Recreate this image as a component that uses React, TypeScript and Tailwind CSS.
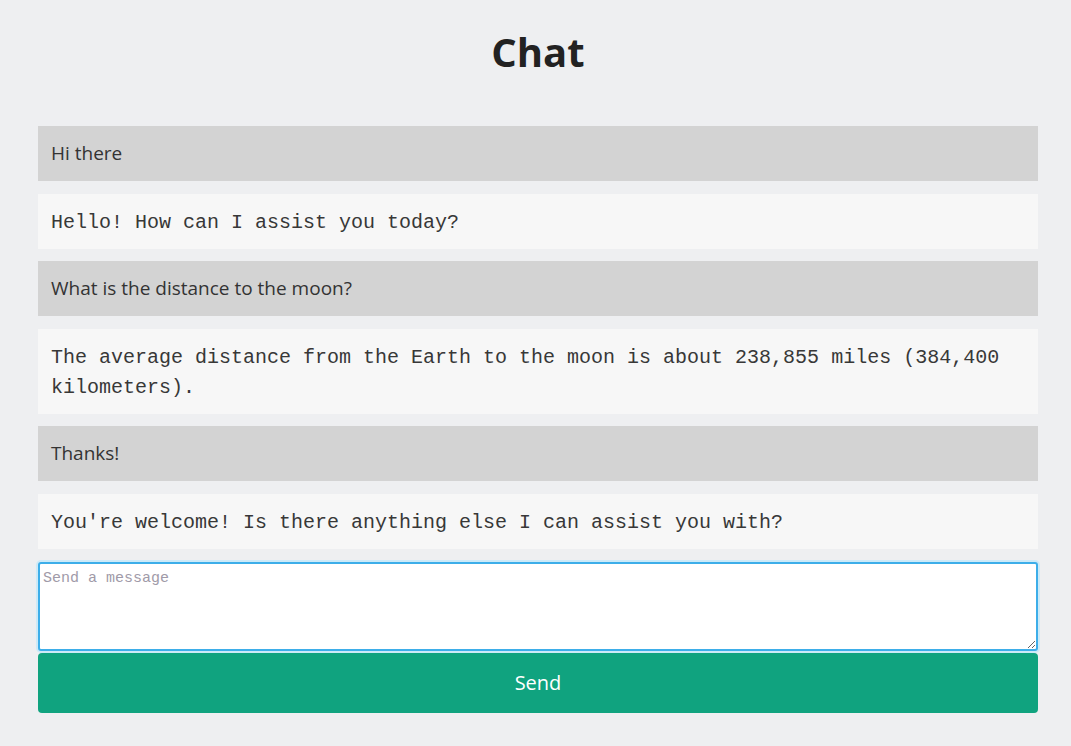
import React from "react";

const messages = [
  { role: "user", text: "Hi there" },
  { role: "assistant", text: "Hello! How can I assist you today?" },
  { role: "user", text: "What is the distance to the moon?" },
  {
    role: "assistant",
    text: "The average distance from the Earth to the moon is about 238,855 miles (384,400 kilometers).",
  },
  { role: "user", text: "Thanks!" },
  { role: "assistant", text: "You're welcome! Is there anything else I can assist you with?" },
];

const Message = ({ role, text }: { role: string; text: string }) =>
  role === "user" ? (
    <div className="bg-[#d3d3d3] px-[13px] pt-[12px] pb-[13px] text-[19px] leading-[30px] text-[#333] font-['Open_Sans',sans-serif]">
      {text}
    </div>
  ) : (
    <div className="bg-[#f7f7f7] px-[13px] pt-[14px] pb-[11px] text-[20px] leading-[30px] text-[#383838] font-['Liberation_Mono',monospace]">
      {text}
    </div>
  );

export default function App() {
  return (
    <div className="min-h-screen bg-[#eeeff1] pb-[33px] font-['Open_Sans',sans-serif]">
      <div className="ml-[38px] w-[1000px]">
        <h1 className="pt-[24px] text-center text-[40px] leading-[56px] font-bold text-[#222]">Chat</h1>
        <div className="mt-[46px] flex flex-col gap-[12.6px]">
          {messages.map((m, i) => (
            <Message key={i} role={m.role} text={m.text} />
          ))}
        </div>
        <div className="mt-[13px] flex flex-col gap-[2px]">
          <textarea
            placeholder="Send a message"
            className="block h-[89px] w-full resize-y rounded-[3px] border-2 border-[#3daee9] bg-white px-[3px] pt-[4px] pb-[2px] text-[15px] font-['Liberation_Mono',monospace] text-[#333] shadow-[0_0_0_2px_#cdeaf8] outline-none placeholder:text-[#a09aa8]"
          />
          <button className="h-[60px] w-full rounded-[4px] bg-[#10a37f] text-[20px] text-white">
            Send
          </button>
        </div>
      </div>
    </div>
  );
}
